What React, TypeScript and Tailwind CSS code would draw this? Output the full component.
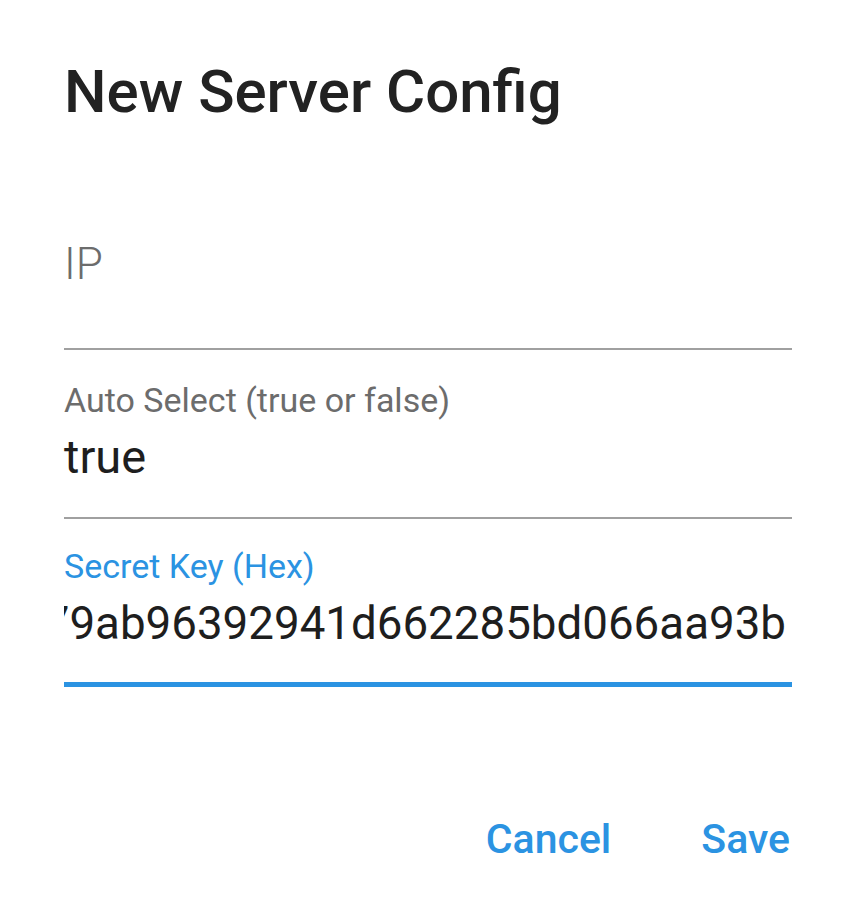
const App = () => {
    const hex = 'c4f1a08e27d5b3e17' + '9ab96392941d662285bd066aa93b';

    return (
        <div className="w-[844px] h-[916px] bg-white flex flex-col pl-[64px] pr-[52px] font-['Roboto',sans-serif]">
            <h1 className="mt-[58px] text-[60px] leading-[68px] font-medium text-[#222222]">New Server Config</h1>

            {/* IP */}
            <div className="mt-[112px] flex flex-col">
                <div className="text-[44px] leading-[52px] font-light text-[#6c6c6c] h-[110px]">IP</div>
                <div className="h-[2px] bg-[#a0a0a0]" />
            </div>

            {/* Auto select */}
            <div className="mt-[30px] flex flex-col">
                <label className="text-[34px] leading-[40px] text-[#6c6c6c]">Auto Select (true or false)</label>
                <div className="mt-[9px] text-[47px] leading-[56px] text-[#1e1e1e] h-[88px]">true</div>
                <div className="h-[2px] bg-[#a0a0a0]" />
            </div>

            {/* Secret key */}
            <div className="mt-[27px] flex flex-col">
                <label className="text-[34px] leading-[40px] text-[#2b93e2]">Secret Key (Hex)</label>
                <div className="mt-[11px] h-[85px] flex justify-end overflow-hidden pr-[6px]">
                    <span className="whitespace-nowrap text-[45.7px] leading-[54px] text-[#1e1e1e]">{hex}</span>
                </div>
                <div className="h-[5px] bg-[#2b93e2]" />
            </div>

            <div className="mt-[128px] flex justify-end items-center gap-[90px] pr-[2px]">
                <button className="text-[41px] leading-[48px] font-medium text-[#2b93e2]">Cancel</button>
                <button className="text-[41px] leading-[48px] font-medium text-[#2b93e2]">Save</button>
            </div>
        </div>
    );
};

export default App;
